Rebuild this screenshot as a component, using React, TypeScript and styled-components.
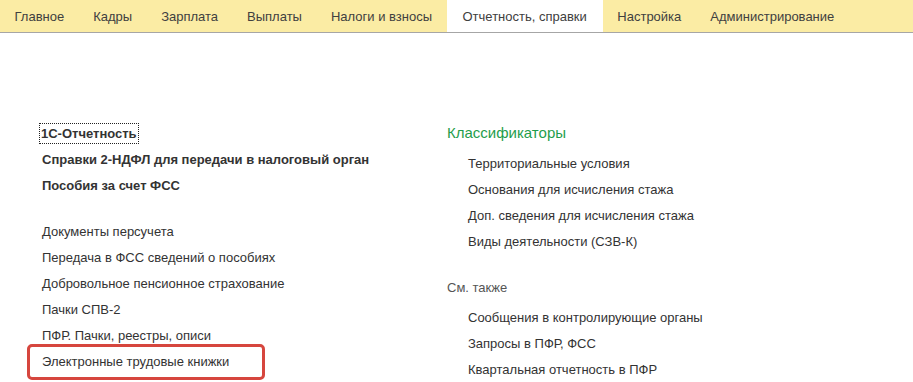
import React from 'react';
import styled, {createGlobalStyle} from 'styled-components';

const GlobalStyle = createGlobalStyle`
    body {
        margin: 0;
        background: #fff;
        font-family: Arial, "Liberation Sans", sans-serif;
        font-size: 13px;
        color: #333;
    }
`;

const TabBar = styled.div`
    display: flex;
    height: 32px;
    background: #fbeca4;
    border-bottom: 1px solid #a6a6a6;
`;

const Tab = styled.div<{ active?: boolean }>`
    display: flex;
    align-items: center;
    padding: 0 ${({active}) => (active ? '16px' : '14.5px')};
    background: ${({active}) => (active ? '#fff' : 'transparent')};
    color: #404040;
    font-size: 13px;
    white-space: nowrap;
`;

const Content = styled.div`
    display: grid;
    grid-template-columns: 405px 1fr;
    padding: 88px 0 0 42px;
`;

const Column = styled.div<{ shift?: number }>`
    display: flex;
    flex-direction: column;
    margin-top: ${({shift}) => shift || 0}px;
`;

const Group = styled.div<{ gap?: number }>`
    display: flex;
    flex-direction: column;
    margin-top: ${({gap}) => gap || 0}px;
`;

const Row = styled.div<{ bold?: boolean; indent?: boolean }>`
    height: 26px;
    line-height: 26px;
    font-weight: ${({bold}) => (bold ? 'bold' : 'normal')};
    padding-left: ${({indent}) => (indent ? '21px' : '0')};
    color: #333;
    white-space: nowrap;
`;

const Focused = styled.span`
    outline: 1px dotted #222;
    padding: 2px 1px;
    margin-left: -2px;
`;

const Highlighted = styled.div`
    box-sizing: border-box;
    height: 36px;
    width: 238px;
    margin: -5px 0 -5px -15px;
    padding-left: 12px;
    line-height: 30px;
    border: 3px solid #d6463e;
    border-radius: 5px;
    color: #333;
    white-space: nowrap;
`;

const Heading = styled.div`
    height: 26px;
    line-height: 26px;
    font-size: 15px;
    color: #1f9d4c;
`;

const Caption = styled.div<{ gap?: number }>`
    height: 26px;
    line-height: 26px;
    color: #555;
    margin-top: ${({gap}) => gap || 0}px;
`;

const tabs = ['Главное', 'Кадры', 'Зарплата', 'Выплаты', 'Налоги и взносы', 'Отчетность, справки', 'Настройка', 'Администрирование'];

const App: React.FC = () => {
    return (
        <>
            <GlobalStyle />
            <TabBar>
                {tabs.map((t) => (
                    <Tab key={t} active={t === 'Отчетность, справки'}>{t}</Tab>
                ))}
            </TabBar>
            <Content>
                <Column>
                    <Group>
                        <Row bold><Focused>1С-Отчетность</Focused></Row>
                        <Row bold>Справки 2-НДФЛ для передачи в налоговый орган</Row>
                        <Row bold>Пособия за счет ФСС</Row>
                    </Group>
                    <Group gap={20}>
                        <Row>Документы персучета</Row>
                        <Row>Передача в ФСС сведений о пособиях</Row>
                        <Row>Добровольное пенсионное страхование</Row>
                        <Row>Пачки СПВ-2</Row>
                        <Row>ПФР. Пачки, реестры, описи</Row>
                        <Highlighted>Электронные трудовые книжки</Highlighted>
                    </Group>
                </Column>
                <Column shift={-1}>
                    <Heading>Классификаторы</Heading>
                    <Group gap={5}>
                        <Row indent>Территориальные условия</Row>
                        <Row indent>Основания для исчисления стажа</Row>
                        <Row indent>Доп. сведения для исчисления стажа</Row>
                        <Row indent>Виды деятельности (СЗВ-К)</Row>
                    </Group>
                    <Caption gap={20}>См. также</Caption>
                    <Group gap={4}>
                        <Row indent>Сообщения в контролирующие органы</Row>
                        <Row indent>Запросы в ПФР, ФСС</Row>
                        <Row indent>Квартальная отчетность в ПФР</Row>
                    </Group>
                </Column>
            </Content>
        </>
    );
};

export default App;
